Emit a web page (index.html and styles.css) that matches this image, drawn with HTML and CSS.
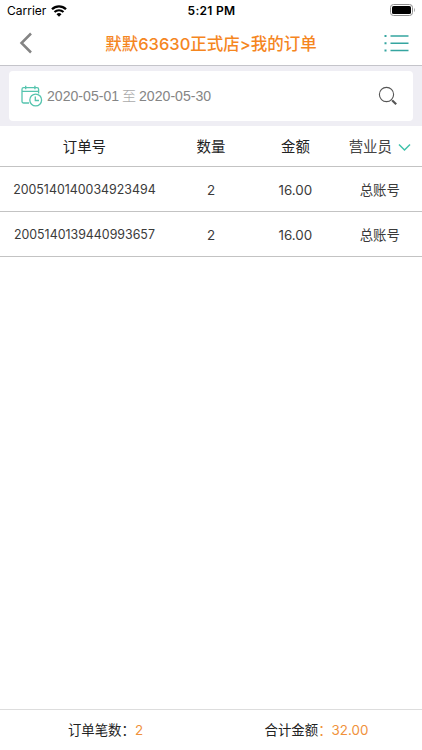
FILE: index.html
```html
<!DOCTYPE html>
<html lang="zh-CN">
<head>
    <meta charset="UTF-8">
    <meta name="viewport" content="width=device-width, initial-scale=1.0">
    <title>我的订单</title>
    <link rel="stylesheet" href="styles.css">
</head>
<body>

    <div class="status-bar">
        <div class="carrier">
            <span>Carrier</span>
            <svg width="16" height="12" viewBox="0 0 16 12">
                <path d="M1 4.3a10 10 0 0 1 14 0" fill="none" stroke="#000" stroke-width="2.3"/>
                <path d="M3.5 7.1a6.4 6.4 0 0 1 9 0" fill="none" stroke="#000" stroke-width="2.1"/>
                <path d="M8 11.7L5.5 9.2a3.5 3.5 0 0 1 5 0z"/>
            </svg>
        </div>
        <div class="time">5:21 PM</div>
        <div class="battery">
            <svg width="26" height="12" viewBox="0 0 26 12">
                <rect x="0.5" y="0.5" width="22" height="11" rx="3" fill="#fff" stroke="#8e8e8e"/>
                <rect x="2" y="2" width="19" height="8" rx="1.6"/>
                <path d="M24 4v4c1.2-.6 1.2-3.4 0-4z" fill="#999"/>
            </svg>
        </div>
    </div>

    <header class="nav">
        <a class="back">
            <svg width="14" height="22" viewBox="0 0 14 22">
                <path d="M12 1.5L2.5 11L12 20.5" fill="none" stroke="#848484" stroke-width="2.5"/>
            </svg>
        </a>
        <h1>默默<span>63630</span>正式店&gt;我的订单</h1>
        <a class="menu">
            <svg width="25" height="18" viewBox="0 0 25 18">
                <path d="M6.5 2H24.5M6.5 9.3H24.5M6.5 16.5H24.5" stroke="#35a5a0" stroke-width="1.4"/>
                <path d="M0.5 2h2M0.5 9.3h2M0.5 16.5h2" stroke="#35a5a0" stroke-width="2"/>
            </svg>
        </a>
    </header>

    <div class="search">
        <div class="search-box">
            <svg width="22" height="22" viewBox="0 0 22 22" fill="none" stroke="#55c4ae" stroke-width="1.3">
                <path d="M8 18H2.6A1.6 1.6 0 0 1 1 16.4V4.2A1.6 1.6 0 0 1 2.6 2.6H16a1.6 1.6 0 0 1 1.6 1.6V8.5M1 6.3H17.6M4.7 0.7V4.3M13.9 0.7V4.3"/>
                <circle cx="14.7" cy="15" r="5.9"/>
                <path d="M14.3 11.6V15.5H18"/>
            </svg>
            <span class="dates">2020-05-01 <i>至</i> 2020-05-30</span>
            <svg class="glass" width="20" height="20" viewBox="0 0 20 20" fill="none" stroke="#555">
                <circle cx="8.5" cy="8.5" r="7.1" stroke-width="1.1"/>
                <path d="M13.4 13.6L14.6 14.8" stroke-width="1"/>
                <path d="M14.3 14.5L18.2 18.3" stroke-width="2.2"/>
            </svg>
        </div>
    </div>

    <main class="orders">
        <div class="row head">
            <div>订单号</div>
            <div>数量</div>
            <div>金额</div>
            <div class="clerk">营业员
                <svg width="13" height="9" viewBox="0 0 13 9">
                    <path d="M1 1.5L6.5 7L12 1.5" fill="none" stroke="#3fc2aa" stroke-width="1.5"/>
                </svg>
            </div>
        </div>
        <div class="row">
            <div class="number">2005140140034923494</div>
            <div>2</div>
            <div>16.00</div>
            <div>总账号</div>
        </div>
        <div class="row">
            <div class="number">2005140139440993657</div>
            <div>2</div>
            <div>16.00</div>
            <div>总账号</div>
        </div>
    </main>

    <footer class="total">
        <div>订单笔数：<b>2</b></div>
        <div>合计金额<b>：32.00</b></div>
    </footer>

</body>
</html>
```
FILE: styles.css
```css
* {
    box-sizing: border-box;
}

body {
    margin: 0;
    height: 100vh;
    display: flex;
    flex-direction: column;
    background-color: #fff;
    color: #3a3a3a;
    font-family: Inter, "Noto Sans CJK SC", sans-serif;
    font-size: 13.4px;
}

svg {
    display: block;
    flex: none;
}

.status-bar {
    display: grid;
    grid-template-columns: 1fr auto 1fr;
    align-items: center;
    height: 22px;
    padding: 0 6px 1px 7px;
    color: #000;
    font-size: 12px;
}

.carrier {
    display: flex;
    align-items: center;
    gap: 5px;
}

.time {
    font-weight: 600;
    letter-spacing: 0.3px;
}

.battery {
    justify-self: end;
    margin-bottom: 1px;
}

.nav {
    display: grid;
    grid-template-columns: 1fr auto 1fr;
    align-items: center;
    height: 44px;
    padding: 0 13px 1px 19px;
    border-bottom: 1px solid #c4c4ca;
}

.nav h1 {
    margin: 0 6px 0 0;
    color: #f5861f;
    font-size: 16.5px;
    font-weight: 500;
}

.menu {
    justify-self: end;
}

.search {
    height: 60px;
    padding: 5px 9px;
    background-color: #efeef4;
}

.search-box {
    display: flex;
    align-items: center;
    height: 50px;
    padding: 0 15px 0 12px;
    background-color: #fff;
    border-radius: 4px;
}

.dates {
    margin: -2px 0 0 4px;
    color: #858585;
    font-family: "Liberation Sans", "Noto Sans CJK SC", sans-serif;
    font-size: 14.1px;
}

.dates i {
    margin: 0 -1px;
    color: #aaa;
    font-style: normal;
    font-weight: 300;
}

.glass {
    margin-left: auto;
}

/* Tabelle */
.orders {
    flex: 1;
}

.row {
    display: grid;
    grid-template-columns: 2fr 1fr 1fr 1fr;
    align-items: center;
    height: 45px;
    padding-top: 1px;
    border-bottom: 1px solid #c3c3c3;
    text-align: center;
    line-height: 18px;
}

.head {
    height: 41px;
    padding-top: 2px;
    color: #222;
    font-size: 14.4px;
}

.number {
    font-size: 12.4px;
}

.clerk {
    display: flex;
    align-items: center;
    justify-content: center;
    gap: 6px;
    color: #444;
}

.total {
    display: grid;
    grid-template-columns: 1fr 1fr;
    align-items: center;
    height: 41px;
    padding-bottom: 3px;
    border-top: 1px solid #ddd;
    color: #222;
    text-align: center;
}

.total b {
    color: #f0913a;
    font-weight: 400;
}
```
